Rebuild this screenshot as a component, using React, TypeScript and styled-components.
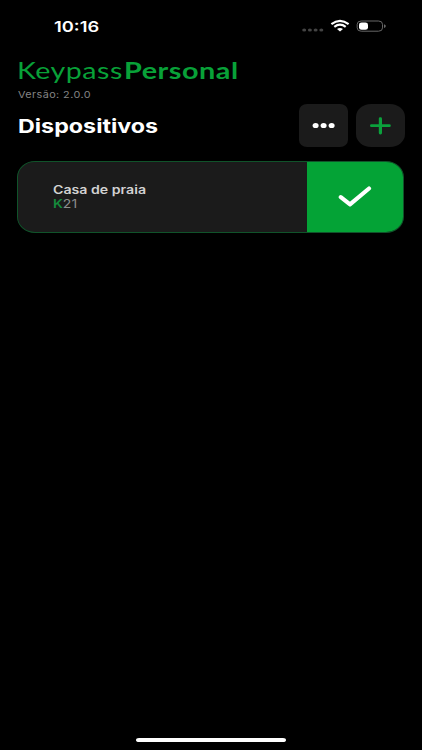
import React from "react";
import styled, { createGlobalStyle } from "styled-components";

const GlobalStyle = createGlobalStyle`
  * { box-sizing: border-box; }
  body { margin: 0; background: #000; }
`;

const Screen = styled.main`
  display: flex;
  flex-direction: column;
  width: 422px;
  height: 750px;
  overflow: hidden;
  background: #000;
  color: #fff;
  font-family: Inter, "Liberation Sans", sans-serif;
`;

/* Wide lettering: glyphs are stretched sideways from their left edge. */
const Label = styled.span<{ $stretch: number }>`
  display: block;
  width: max-content;
  white-space: nowrap;
  transform: scaleX(${(p) => p.$stretch});
  transform-origin: left center;
`;

const StatusBar = styled.header`
  display: flex;
  justify-content: space-between;
  align-items: center;
  height: 52px;
  padding: 0 35px 0 54px;
`;

const Clock = styled(Label)`
  padding-top: 1px;
  font-size: 15px;
  line-height: 20px;
  font-weight: 600;
`;

const StatusIcons = styled.div`
  display: flex;
  align-items: center;
  svg { display: block; }
`;

const Content = styled.section`
  display: flex;
  flex-direction: column;
  flex: 1;
  padding: 4px 17px 0 18px;
`;

const Brand = styled.h1`
  display: grid;
  grid-template-columns: 106px auto;
  height: 30px;
  margin: 0;
  color: #08a138;
  font-family: Lato, sans-serif;
  font-size: 22.5px;
  line-height: 29px;
  font-weight: 400;
`;

const BrandLight = styled(Label)`
  margin-left: -1px;
  letter-spacing: 0.4px;
`;

const BrandStrong = styled(Label)`
  font-weight: 700;
  letter-spacing: 0.4px;
`;

const Version = styled(Label)`
  height: 16px;
  color: #858585;
  font-size: 9.2px;
  line-height: 18px;
  letter-spacing: 0.35px;
`;

const TitleRow = styled.div`
  display: flex;
  align-items: center;
  justify-content: space-between;
  height: 43px;
  margin-top: 2px;
`;

const Title = styled(Label)`
  padding-top: 2px;
  font-size: 19px;
  line-height: 24px;
  font-weight: 700;
`;

const Actions = styled.div`
  display: flex;
  gap: 8px;
`;

const ActionButton = styled.button<{ $radius: string }>`
  display: grid;
  place-items: center;
  width: 49px;
  height: 43px;
  padding: 0;
  border: 0;
  border-radius: ${(p) => p.$radius};
  background: #1b1b1b;
  svg { display: block; }
`;

const DeviceCard = styled.article`
  display: flex;
  width: 387px;
  height: 72px;
  margin-top: 14px;
  margin-left: -1px;
  overflow: hidden;
  border: 1px solid #10532a;
  border-radius: 18px / 16px;
  background: #1b1b1b;
`;

const DeviceInfo = styled.div`
  display: flex;
  flex-direction: column;
  flex: 1;
  padding: 21px 0 0 35px;
`;

const DeviceName = styled(Label)`
  color: #d2d2d2;
  font-size: 11.5px;
  line-height: 14px;
  font-weight: 600;
`;

const DeviceModel = styled(Label)`
  color: #8d8d8d;
  font-size: 11.5px;
  line-height: 14px;
`;

const ModelLetter = styled.b`
  color: #158b3c;
  font-weight: 600;
`;

const SelectedMark = styled.div`
  display: grid;
  place-items: center;
  width: 97px;
  margin: -1px -1px -1px 0;
  padding-right: 1px;
  background: #04a336;
  svg { display: block; }
`;

const HomeArea = styled.footer`
  display: flex;
  justify-content: center;
  height: 12px;
`;

const HomeIndicator = styled.div`
  width: 150px;
  height: 4px;
  border-radius: 3px / 2px;
  background: #fff;
`;

const StatusGlyphs = () => (
  <svg width="88" height="16" viewBox="0 0 88 16" fill="none">
    <g fill="#444">
      <ellipse cx="5.2" cy="12" rx="2" ry="1.6" />
      <ellipse cx="10.9" cy="12" rx="2" ry="1.6" />
      <ellipse cx="16.6" cy="12" rx="2" ry="1.6" />
      <ellipse cx="22.3" cy="12" rx="2" ry="1.6" />
    </g>
    <g stroke="#fff" strokeWidth="2.2">
      <path d="M32.4 6.1 Q41 -0.5 49.6 6.1" />
      <path d="M35.3 8.9 Q41 4.5 46.7 8.9" />
    </g>
    <path d="M38 11 Q41 8.8 44 11 L41 13.4 Z" fill="#fff" />
    <rect x="58.2" y="3" width="25.3" height="10.2" rx="4" ry="3.3" stroke="#676767" />
    <rect x="60" y="4.5" width="9" height="7.2" rx="2.6" ry="2.2" fill="#fff" />
    <path d="M85 6.2 Q86.8 6.8 86.8 8.1 Q86.8 9.4 85 10Z" fill="#676767" />
  </svg>
);

const MoreIcon = () => (
  <svg width="24" height="8" viewBox="0 0 24 8" fill="#fff">
    <ellipse cx="3.6" cy="3.5" rx="3" ry="2.6" />
    <ellipse cx="11.6" cy="3.5" rx="3" ry="2.6" />
    <ellipse cx="19.6" cy="3.5" rx="3" ry="2.6" />
  </svg>
);

const PlusIcon = () => (
  <svg width="22" height="18" viewBox="0 0 22 18" fill="#0ba13c">
    <rect x="8.8" y="0.3" width="3.2" height="17.2" rx="1.4" />
    <rect x="0" y="7.3" width="20.8" height="2.8" rx="1.4" />
  </svg>
);

const CheckIcon = () => (
  <svg width="34" height="22" viewBox="0 0 34 22" fill="none">
    <path d="M2.8 11.1 L12 18.3 L31 2.5" stroke="#fff" strokeWidth="4.2" strokeLinecap="round" strokeLinejoin="round" />
  </svg>
);

export default function App() {
  return (
    <>
      <GlobalStyle />
      <Screen>
        <StatusBar>
          <Clock $stretch={1.22}>10:16</Clock>
          <StatusIcons><StatusGlyphs /></StatusIcons>
        </StatusBar>
        <Content>
          <Brand>
            <BrandLight $stretch={1.27}>Keypass</BrandLight>
            <BrandStrong $stretch={1.28}>Personal</BrandStrong>
          </Brand>
          <Version $stretch={1.18}>Versão: 2.0.0</Version>
          <TitleRow>
            <Title $stretch={1.225}>Dispositivos</Title>
            <Actions>
              <ActionButton $radius="8px / 7px" aria-label="Mais opções"><MoreIcon /></ActionButton>
              <ActionButton $radius="15px / 13px" aria-label="Adicionar"><PlusIcon /></ActionButton>
            </Actions>
          </TitleRow>
          <DeviceCard>
            <DeviceInfo>
              <DeviceName $stretch={1.23}>Casa de praia</DeviceName>
              <DeviceModel $stretch={1.22}><ModelLetter>K</ModelLetter>21</DeviceModel>
            </DeviceInfo>
            <SelectedMark><CheckIcon /></SelectedMark>
          </DeviceCard>
        </Content>
        <HomeArea><HomeIndicator /></HomeArea>
      </Screen>
    </>
  );
}
